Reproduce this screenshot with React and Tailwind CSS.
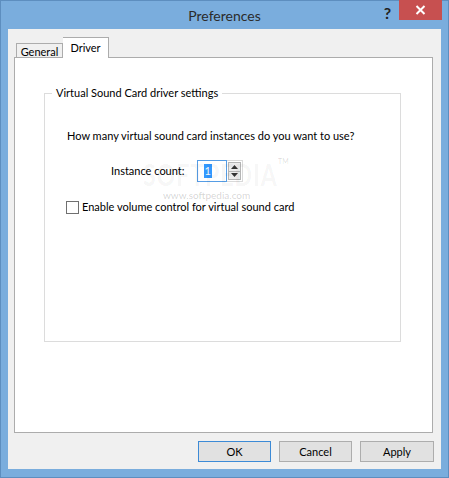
export default function App() {
  const ui = { fontFamily: 'Lato, "Open Sans", sans-serif' };

  return (
    <div
      className="w-[449px] h-[478px] bg-[#7aaddd] border border-[#5d8ebf] flex flex-col text-[11px] text-black whitespace-nowrap"
      style={ui}
    >
      {/* title bar */}
      <div className="relative h-[28px] shrink-0 flex items-center justify-center">
        <span className="text-[14px] text-[#2b2b2b] leading-none mt-[1px]">Preferences</span>
        <div className="absolute right-[6px] top-[-1px] flex items-start">
          <span className="text-[16px] font-bold text-[#222] leading-none mt-[5px] mr-[8px]">?</span>
          <div className="w-[43px] h-[20px] bg-[#c75050] flex items-center justify-center">
            <svg width="11" height="10" viewBox="0 0 11 10">
              <path d="M1.5 1 L9.5 9 M9.5 1 L1.5 9" stroke="white" strokeWidth="2" />
            </svg>
          </div>
        </div>
      </div>

      {/* client area */}
      <div className="mx-[7px] h-[440px] bg-[#f0f0f0] flex flex-col">
        {/* tabs */}
        <div className="flex items-end h-[28px] pl-[8px]">
          <div className="h-[14px] w-[47px] bg-[#f0f0f0] border border-b-0 border-[#acacac] flex items-center justify-center leading-none pt-[1px]">
            General
          </div>
          <div className="h-[21px] w-[46px] bg-white border border-b-0 border-l-0 border-[#acacac] flex items-start justify-center leading-none pt-[4px] relative z-10 translate-y-[1px]">
            Driver
          </div>
        </div>

        {/* tab panel */}
        <div className="ml-[6px] w-[419px] h-[376px] bg-white border border-[#acacac] pt-[35px] pl-[29px]">
          <div className="relative w-[357px] h-[249px] border border-[#dcdcdc] pt-[34px] pl-[22px]">
            <span className="absolute top-[-9px] left-[7px] bg-white px-[4px] leading-4">
              Virtual Sound Card driver settings
            </span>
            <div className="leading-4 h-4">How many virtual sound card instances do you want to use?</div>

            <div className="mt-[16px] flex items-center h-[22px] pl-[44px]">
              <span className="leading-4">Instance count:</span>
              <div className="ml-[12px] flex h-[22px]">
                <div className="w-[30px] h-[22px] border border-[#569de5] bg-white flex items-center pl-[6px]">
                  <span className="bg-[#3399ff] text-white leading-[14px] px-[1px]">1</span>
                </div>
                <div className="w-[16px] h-[22px] flex flex-col border border-l-0 border-[#d9d9d9] p-[1px]">
                  <div className="flex-1 bg-[#ececec] border border-[#b5b5b5] flex items-center justify-center">
                    <svg width="7" height="4" viewBox="0 0 7 4"><path d="M0 4 L3.5 0 L7 4 Z" fill="#333" /></svg>
                  </div>
                  <div className="flex-1 bg-[#ececec] border border-t-0 border-[#b5b5b5] flex items-center justify-center">
                    <svg width="7" height="4" viewBox="0 0 7 4"><path d="M0 0 L3.5 4 L7 0 Z" fill="#333" /></svg>
                  </div>
                </div>
              </div>
            </div>

            <div className="mt-[17px] flex items-center h-[16px] ml-[-1px]">
              <div className="w-[13px] h-[13px] border border-[#707070] bg-white" />
              <span className="ml-[3px] leading-4">Enable volume control for virtual sound card</span>
            </div>

            {/* watermark */}
            <span className="absolute left-[98px] top-[66px] text-[23px] font-bold tracking-[1px] scale-y-[1.3] origin-top-left text-black/[0.05] leading-none pointer-events-none select-none">
              SOFTPEDIA
            </span>
            <span className="absolute left-[233px] top-[64px] text-[7px] text-black/[0.15] leading-none pointer-events-none select-none">
              TM
            </span>
            <span className="absolute left-[118px] top-[96px] text-[10px] text-black/[0.18] leading-none pointer-events-none select-none">
              www.softpedia.com
            </span>
          </div>
        </div>

        {/* buttons */}
        <div className="flex justify-end gap-[8px] pr-[7px] mt-[8px]">
          <button className="w-[73px] h-[21px] bg-[#e1e1e1] border border-[#3c8ad6] leading-none">OK</button>
          <button className="w-[73px] h-[21px] bg-[#e1e1e1] border border-[#adadad] leading-none">Cancel</button>
          <button className="w-[74px] h-[21px] bg-[#e1e1e1] border border-[#adadad] leading-none">Apply</button>
        </div>
      </div>
    </div>
  );
}
